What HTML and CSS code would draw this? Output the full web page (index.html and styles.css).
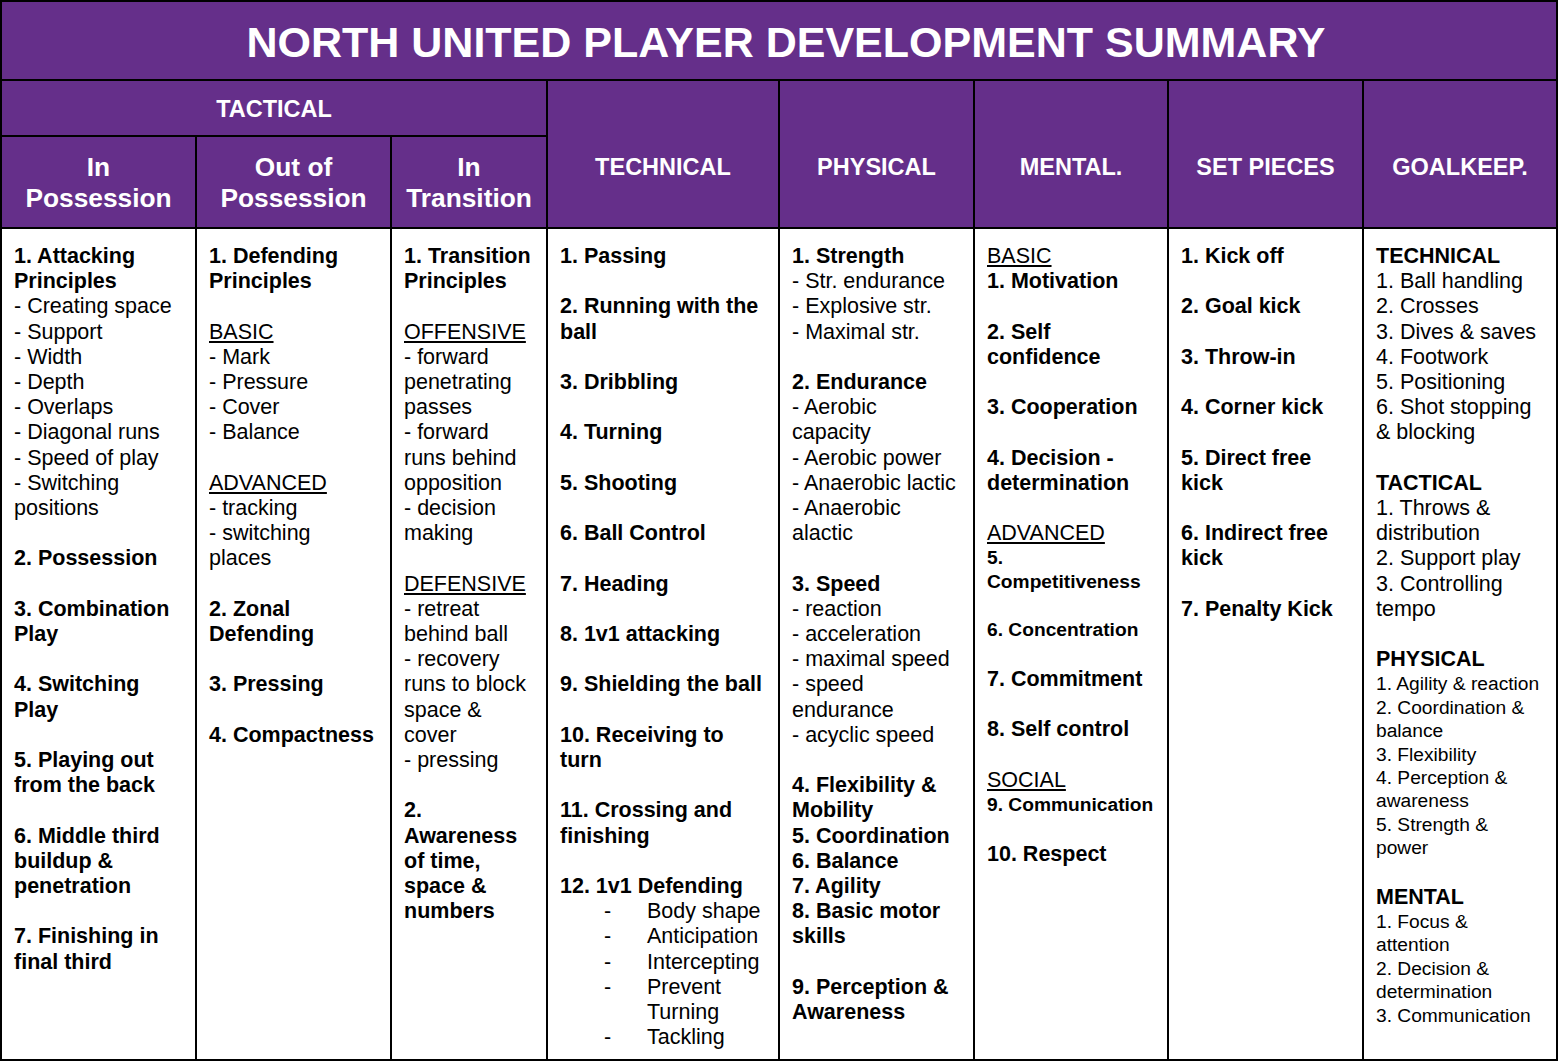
FILE: index.html
```html
<!DOCTYPE html>
<html lang="en">
<head>
<meta charset="utf-8">
<title>North United Player Development Summary</title>
<link rel="stylesheet" href="styles.css">
</head>
<body>
<div class="sheet">
  <div class="title">NORTH UNITED PLAYER DEVELOPMENT SUMMARY</div>

  <div class="group">TACTICAL</div>
  <div class="cat">TECHNICAL</div>
  <div class="cat">PHYSICAL</div>
  <div class="cat">MENTAL.</div>
  <div class="cat">SET PIECES</div>
  <div class="cat">GOALKEEP.</div>

  <div class="sub">In Possession</div>
  <div class="sub">Out of Possession</div>
  <div class="sub">In Transition</div>

  <div class="cell">
    <p class="b">1. Attacking Principles</p>
    <p>- Creating space</p>
    <p>- Support</p>
    <p>- Width</p>
    <p>- Depth</p>
    <p>- Overlaps</p>
    <p>- Diagonal runs</p>
    <p>- Speed of play</p>
    <p>- Switching positions</p>
    <p class="b sp">2. Possession</p>
    <p class="b sp">3. Combination Play</p>
    <p class="b sp">4. Switching Play</p>
    <p class="b sp">5. Playing out from the back</p>
    <p class="b sp">6. Middle third buildup &amp; penetration</p>
    <p class="b sp">7. Finishing in final third</p>
  </div>

  <div class="cell">
    <p class="b">1. Defending Principles</p>
    <p class="u sp">BASIC</p>
    <p>- Mark</p>
    <p>- Pressure</p>
    <p>- Cover</p>
    <p>- Balance</p>
    <p class="u sp">ADVANCED</p>
    <p>- tracking</p>
    <p>- switching places</p>
    <p class="b sp">2. Zonal Defending</p>
    <p class="b sp">3. Pressing</p>
    <p class="b sp">4. Compactness</p>
  </div>

  <div class="cell">
    <p class="b">1. Transition Principles</p>
    <p class="u sp">OFFENSIVE</p>
    <p>- forward penetrating passes</p>
    <p>- forward runs behind opposition</p>
    <p>- decision making</p>
    <p class="u sp">DEFENSIVE</p>
    <p>- retreat behind ball</p>
    <p>- recovery runs to block space &amp; cover</p>
    <p>- pressing</p>
    <p class="b sp">2. Awareness of time, space &amp; numbers</p>
  </div>

  <div class="cell">
    <p class="b">1. Passing</p>
    <p class="b sp">2. Running with the ball</p>
    <p class="b sp">3. Dribbling</p>
    <p class="b sp">4. Turning</p>
    <p class="b sp">5. Shooting</p>
    <p class="b sp">6. Ball Control</p>
    <p class="b sp">7. Heading</p>
    <p class="b sp">8. 1v1 attacking</p>
    <p class="b sp">9. Shielding the ball</p>
    <p class="b sp">10. Receiving to turn</p>
    <p class="b sp">11. Crossing and finishing</p>
    <p class="b sp">12. 1v1 Defending</p>
    <ul class="dash">
      <li><span>-</span><span>Body shape</span></li>
      <li><span>-</span><span>Anticipation</span></li>
      <li><span>-</span><span>Intercepting</span></li>
      <li><span>-</span><span>Prevent Turning</span></li>
      <li><span>-</span><span>Tackling</span></li>
    </ul>
  </div>

  <div class="cell">
    <p class="b">1. Strength</p>
    <p>- Str. endurance</p>
    <p>- Explosive str.</p>
    <p>- Maximal str.</p>
    <p class="b sp">2. Endurance</p>
    <p>- Aerobic<br>capacity</p>
    <p>- Aerobic power</p>
    <p>- Anaerobic lactic</p>
    <p>- Anaerobic alactic</p>
    <p class="b sp">3. Speed</p>
    <p>- reaction</p>
    <p>- acceleration</p>
    <p>- maximal speed</p>
    <p>- speed endurance</p>
    <p>- acyclic speed</p>
    <p class="b sp">4. Flexibility &amp; Mobility</p>
    <p class="b">5. Coordination</p>
    <p class="b">6. Balance</p>
    <p class="b">7. Agility</p>
    <p class="b">8. Basic motor skills</p>
    <p class="b sp">9. Perception &amp; Awareness</p>
  </div>

  <div class="cell">
    <p class="u">BASIC</p>
    <p class="b">1. Motivation</p>
    <p class="b sp">2. Self confidence</p>
    <p class="b sp">3. Cooperation</p>
    <p class="b sp">4. Decision - determination</p>
    <p class="u sp">ADVANCED</p>
    <p class="b s">5. Competitiveness</p>
    <p class="b s sp">6. Concentration</p>
    <p class="b sp">7. Commitment</p>
    <p class="b sp">8. Self control</p>
    <p class="u sp">SOCIAL</p>
    <p class="b s nw">9. Communication</p>
    <p class="b sp">10. Respect</p>
  </div>

  <div class="cell">
    <p class="b">1. Kick off</p>
    <p class="b sp">2. Goal kick</p>
    <p class="b sp">3. Throw-in</p>
    <p class="b sp">4. Corner kick</p>
    <p class="b sp">5. Direct free kick</p>
    <p class="b sp">6. Indirect free kick</p>
    <p class="b sp">7. Penalty Kick</p>
  </div>

  <div class="cell">
    <p class="b">TECHNICAL</p>
    <p>1. Ball handling</p>
    <p>2. Crosses</p>
    <p>3. Dives &amp; saves</p>
    <p>4. Footwork</p>
    <p>5. Positioning</p>
    <p>6. Shot stopping &amp; blocking</p>
    <p class="b sp">TACTICAL</p>
    <p>1. Throws &amp; distribution</p>
    <p>2. Support play</p>
    <p>3. Controlling tempo</p>
    <p class="b sp">PHYSICAL</p>
    <p class="s">1. Agility &amp; reaction</p>
    <p class="s">2. Coordination &amp; balance</p>
    <p class="s">3. Flexibility</p>
    <p class="s">4. Perception &amp; awareness</p>
    <p class="s">5. Strength &amp;<br>power</p>
    <p class="b sp">MENTAL</p>
    <p class="s">1. Focus &amp;<br>attention</p>
    <p class="s">2. Decision &amp; determination</p>
    <p class="s">3. Communication</p>
  </div>
</div>
</body>
</html>
```

FILE: styles.css
```css
* {
  box-sizing: border-box;
}

html, body {
  margin: 0;
  padding: 0;
  background: #ffffff;
}

body {
  font-family: "Liberation Sans", Arial, sans-serif;
  color: #000000;
}

.sheet {
  display: grid;
  width: 1558px;
  height: 1061px;
  padding: 2px;
  gap: 2px;
  background: #000000;
  grid-template-columns: 193px 193px 154px 230px 193px 192px 193px 192px;
  grid-template-rows: 77px 54px 90px 1fr;
}

.title {
  grid-column: 1 / -1;
  background: #652f8a;
  color: #ffffff;
  font-weight: bold;
  font-size: 43px;
  display: flex;
  align-items: center;
  justify-content: center;
  padding: 3px 0 0 14px;
}

.group {
  grid-column: span 3;
  background: #652f8a;
  color: #ffffff;
  font-weight: bold;
  font-size: 23.5px;
  display: flex;
  align-items: center;
  justify-content: center;
  padding-top: 2px;
}

.cat {
  grid-row: span 2;
  background: #652f8a;
  color: #ffffff;
  font-weight: bold;
  font-size: 23.5px;
  display: flex;
  align-items: center;
  justify-content: center;
  padding-top: 26px;
}

.sub {
  background: #652f8a;
  color: #ffffff;
  font-weight: bold;
  font-size: 26.3px;
  line-height: 31.5px;
  display: flex;
  align-items: center;
  justify-content: center;
  text-align: center;
  padding: 2px 12px 0;
}

.cell {
  background: #ffffff;
  padding: 15px 12px 0;
  font-size: 21.5px;
  line-height: 25.2px;
}

.cell p {
  margin: 0;
}

.b {
  font-weight: bold;
}

.u {
  text-decoration: underline;
  text-underline-offset: 2px;
}

.sp {
  margin-top: 25.2px !important;
}

.s {
  font-size: 19.2px;
  line-height: 23.4px;
}

.nw {
  white-space: nowrap;
}

.dash {
  list-style: none;
  margin: 0;
  padding: 0 0 0 44px;
}

.dash li {
  display: grid;
  grid-template-columns: 43px 1fr;
}
```
